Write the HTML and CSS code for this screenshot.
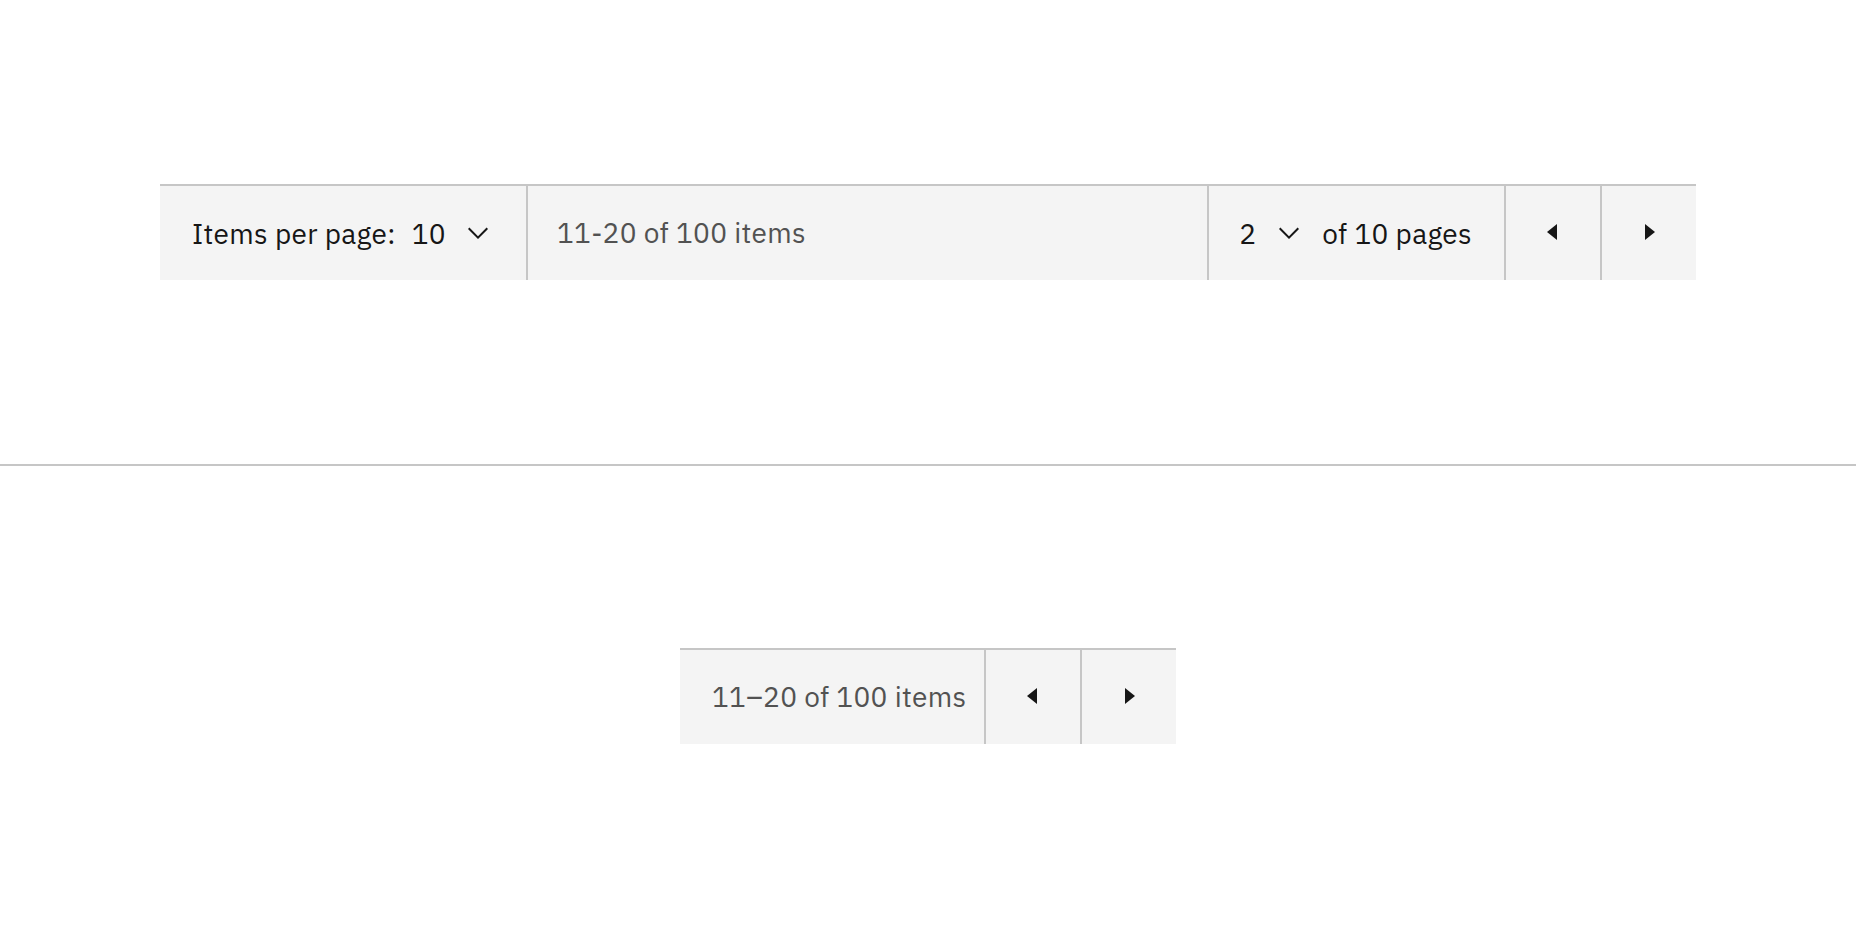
FILE: index.html
```html
<!DOCTYPE html>
<html lang="en">
<head>
<meta charset="utf-8">
<title>Pagination</title>
<link rel="stylesheet" href="styles.css">
</head>
<body>
<section class="stage stage-top">
  <nav class="pagination pagination-full" aria-label="Pagination">
    <div class="pp">
      <span class="label">Items per page:</span>
      <span class="value value-pp">10</span>
      <svg class="chev" viewBox="0 0 32 32" width="32" height="32" aria-hidden="true"><path d="M16 22L6 12 7.4 10.6 16 19.2 24.6 10.6 26 12z"/></svg>
    </div>
    <div class="range">11-20 of 100 items</div>
    <div class="pages">
      <span class="value">2</span>
      <svg class="chev" viewBox="0 0 32 32" width="32" height="32" aria-hidden="true"><path d="M16 22L6 12 7.4 10.6 16 19.2 24.6 10.6 26 12z"/></svg>
      <span class="of">of 10 pages</span>
    </div>
    <button class="nav-btn" type="button" aria-label="Previous page"><svg viewBox="0 0 32 32" width="32" height="32"><path d="M20 24L10 16 20 8z"/></svg></button>
    <button class="nav-btn" type="button" aria-label="Next page"><svg viewBox="0 0 32 32" width="32" height="32"><path d="M12 8L22 16 12 24z"/></svg></button>
  </nav>
</section>
<section class="stage stage-bottom">
  <nav class="pagination pagination-compact" aria-label="Pagination">
    <div class="range range-compact">11–20 of 100 items</div>
    <button class="nav-btn" type="button" aria-label="Previous page"><svg viewBox="0 0 32 32" width="32" height="32"><path d="M20 24L10 16 20 8z"/></svg></button>
    <button class="nav-btn" type="button" aria-label="Next page"><svg viewBox="0 0 32 32" width="32" height="32"><path d="M12 8L22 16 12 24z"/></svg></button>
  </nav>
</section>
</body>
</html>
```
FILE: styles.css
```css
* {
  box-sizing: border-box;
}

html, body {
  margin: 0;
  padding: 0;
  background: #ffffff;
}

body {
  font-family: "IBM Plex Sans", "Liberation Sans", Arial, sans-serif;
  font-size: 28px;
  letter-spacing: 0.32px;
  color: #161616;
  width: 1856px;
  height: 928px;
  display: flex;
  flex-direction: column;
}

.stage {
  display: flex;
  align-items: center;
  justify-content: center;
  flex: none;
}

.stage-top {
  height: 466px;
  border-bottom: 2px solid #c6c6c6;
}

.stage-bottom {
  height: 462px;
  padding-bottom: 2px;
}

.pagination {
  display: flex;
  align-items: stretch;
  height: 96px;
  padding-bottom: 2px;
  background: #f4f4f4;
  border-top: 2px solid #c6c6c6;
}

.pagination-full {
  width: 1536px;
}

.pagination-compact {
  width: 496px;
}

.pp {
  display: flex;
  align-items: center;
  padding: 0 32px;
  border-right: 2px solid #c6c6c6;
  margin-bottom: -2px;
}

.value-pp {
  margin-left: 16px;
}

.chev {
  width: 32px;
  height: 32px;
  margin-left: 16px;
  fill: #161616;
  flex: none;
}

.range {
  flex: 1;
  display: flex;
  align-items: center;
  padding-left: 29px;
  color: #525252;
  white-space: nowrap;
}

.range-compact {
  padding-left: 32px;
}

.pages {
  display: flex;
  align-items: center;
  padding: 0 32px 0 30px;
  border-left: 2px solid #c6c6c6;
  margin-bottom: -2px;
}

.pages .chev {
  margin-left: 17px;
}

.of {
  margin-left: 17px;
}

.nav-btn {
  width: 96px;
  flex: none;
  display: flex;
  align-items: center;
  justify-content: center;
  padding: 0 0 2px;
  margin: 0 0 -2px;
  background: transparent;
  border: 0;
  border-left: 2px solid #c6c6c6;
  cursor: pointer;
}

.nav-btn svg {
  width: 32px;
  height: 32px;
  fill: #161616;
}
```
